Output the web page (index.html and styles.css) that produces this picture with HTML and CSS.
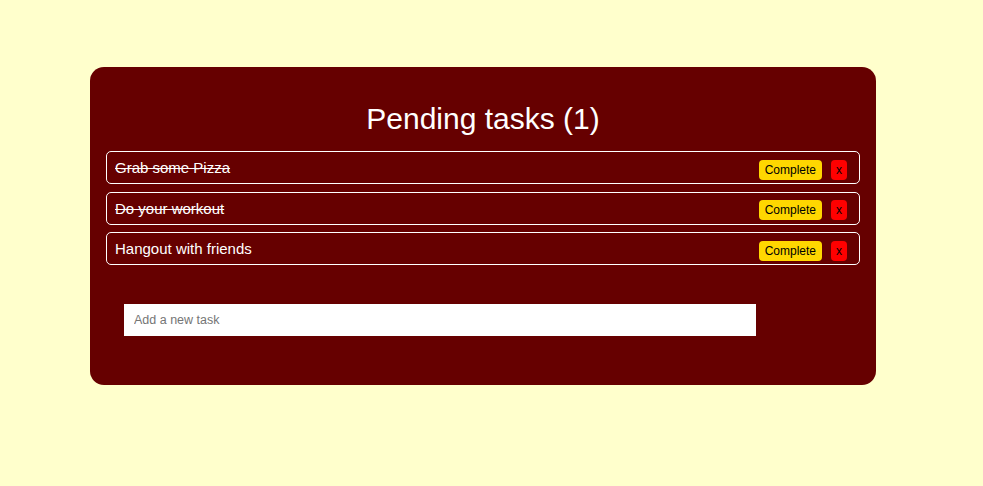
FILE: index.html
```html
<!DOCTYPE html>
<html lang="en">
<head>
<meta charset="utf-8">
<title>Pending tasks</title>
<link rel="stylesheet" href="styles.css">
</head>
<body>
<main class="card">
  <h1 class="title">Pending tasks (1)</h1>
  <ul class="tasks">
    <li class="task done">
      <span class="task-text">Grab some Pizza</span>
      <button class="btn btn-complete">Complete</button>
      <button class="btn btn-delete">x</button>
    </li>
    <li class="task done">
      <span class="task-text">Do your workout</span>
      <button class="btn btn-complete">Complete</button>
      <button class="btn btn-delete">x</button>
    </li>
    <li class="task">
      <span class="task-text">Hangout with friends</span>
      <button class="btn btn-complete">Complete</button>
      <button class="btn btn-delete">x</button>
    </li>
  </ul>
  <form class="add-form">
    <input class="add-input" type="text" placeholder="Add a new task">
  </form>
</main>
</body>
</html>
```

FILE: styles.css
```css
html, body {
  margin: 0;
  padding: 0;
}

body {
  background: #ffffcc;
  font-family: "Liberation Sans", Arial, sans-serif;
  min-height: 486px;
  padding-top: 67px;
  box-sizing: border-box;
}

.card {
  width: 786px;
  margin-left: 90px;
  box-sizing: border-box;
  background: #660000;
  border-radius: 14px;
  padding: 35px 16px 49px 16px;
}

.title {
  margin: 0 0 15px 0;
  font-size: 30px;
  line-height: 34px;
  font-weight: normal;
  color: #ffffff;
  text-align: center;
}

.tasks {
  list-style: none;
  margin: 0;
  padding: 0;
  display: flex;
  flex-direction: column;
  gap: 7.5px;
}

.task {
  height: 33px;
  box-sizing: border-box;
  border: 1px solid #ffffff;
  border-radius: 5px;
  display: flex;
  align-items: center;
  padding: 0 12px 0 8px;
  color: #ffffff;
  font-size: 15px;
}

.task-text {
  flex: 1;
}

.task.done .task-text {
  text-decoration: line-through;
}

.btn {
  border: none;
  font-family: "Liberation Sans", Arial, sans-serif;
  font-size: 12px;
  line-height: 14px;
  color: #000000;
  border-radius: 4px;
  padding: 3px 6px;
  margin: 2px 0 -2px 0;
  cursor: pointer;
}

.btn-complete {
  background: #ffd700;
}

.btn-delete {
  background: #ff0000;
  padding: 3px 5px;
  margin-left: 9px;
}

.add-form {
  margin: 39px 0 0 18px;
}

.add-input {
  display: block;
  width: 632px;
  height: 32px;
  box-sizing: border-box;
  border: none;
  outline: none;
  background: #ffffff;
  padding: 0 10px;
  font-family: "Liberation Sans", Arial, sans-serif;
  font-size: 12.5px;
  color: #000;
}

.add-input::placeholder {
  color: #757575;
}
```
